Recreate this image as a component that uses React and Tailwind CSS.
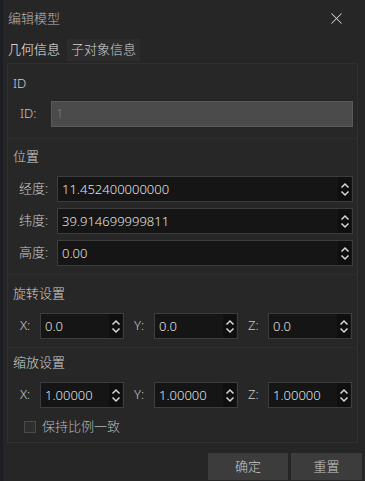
import { X } from "lucide-react";

const font = { fontFamily: '"Noto Sans", "Noto Sans CJK SC", sans-serif' };

function Spin() {
    return (
        <div className="flex flex-col items-center justify-center w-[13px] h-full bg-[#0f0f0f] gap-[1px] mr-[1px]">
            <svg width="10" height="7" viewBox="0 0 10 7">
                <path d="M1.5 5.5 L5 2 L8.5 5.5" fill="none" stroke="#d8d8d8" strokeWidth="1.5" />
            </svg>
            <svg width="10" height="7" viewBox="0 0 10 7">
                <path d="M1.5 1.5 L5 5 L8.5 1.5" fill="none" stroke="#d8d8d8" strokeWidth="1.5" />
            </svg>
        </div>
    );
}

function NumberInput({ value, className = "" }) {
    return (
        <div className={`flex items-center h-[26px] bg-[#151515] border border-[#3d3d3d] ${className}`}>
            <span className="flex-1 pl-[4px] text-[13px] text-[#e4e4e4] leading-none">{value}</span>
            <Spin />
        </div>
    );
}

function GroupTitle({ children }) {
    return <div className="h-[20px] flex items-center pl-[5px] text-[13px] text-[#d4d4d4]">{children}</div>;
}

function XYZRow({ values }) {
    const labels = ["X:", "Y:", "Z:"];
    return (
        <div className="flex items-center pl-[12px] pr-[4px]">
            {labels.map((l, i) => (
                <div key={l} className={`flex items-center ${i > 0 ? "ml-[10px]" : ""}`}>
                    <span className="w-[20px] text-[13px] text-[#c8c8c8]">{l}</span>
                    <NumberInput value={values[i]} className="w-[84px]" />
                </div>
            ))}
        </div>
    );
}

export default function App() {
    return (
        <div className="w-[365px] h-[481px] bg-[#262626] flex flex-col border-l-[3px] border-[#1d1d24] overflow-hidden font-light" style={font}>
            <div className="h-[37px] flex items-center justify-between pl-[5px] pr-[19px] shrink-0">
                <span className="text-[13px] text-[#b8b8b8]">编辑模型</span>
                <X size={19} strokeWidth={1.3} color="#cfcfcf" />
            </div>
            <div className="h-[22px] flex items-stretch shrink-0 mt-[2px]">
                <div className="w-[62px] flex items-center pl-[5px] text-[13px] text-[#f0f0f0]">几何信息</div>
                <div className="ml-[2px] w-[73px] flex items-center justify-center bg-[#2c2c2c] text-[13px] text-[#d0d0d0]">子对象信息</div>
            </div>
            <div className="ml-[4px] mr-[7px] mt-[2px] h-[380px] border border-[#303030] bg-[#272727] flex flex-col shrink-0">
                {/* ID */}
                <div className="pt-[10px] h-[75px] border-b border-[#2e2e2e]">
                    <GroupTitle>ID</GroupTitle>
                    <div className="flex items-center mt-[7px] pl-[12px] pr-[4px]">
                        <span className="w-[31px] text-[13px] text-[#c8c8c8]">ID:</span>
                        <div className="flex-1 h-[26px] bg-[#4b4b4b] border border-[#5a5a5a] flex items-center pl-[4px] text-[13px] text-[#7a7a7a]">1</div>
                    </div>
                </div>
                {/* 位置 */}
                <div className="pt-[8px] h-[136px] border-b border-[#2e2e2e]">
                    <GroupTitle>位置</GroupTitle>
                    <div className="flex flex-col gap-[6px] mt-[9px] pl-[11px] pr-[4px]">
                        {[
                            ["经度:", "11.452400000000"],
                            ["纬度:", "39.914699999811"],
                            ["高度:", "0.00"],
                        ].map(([l, v]) => (
                            <div key={l} className="flex items-center">
                                <span className="w-[38px] text-[13px] text-[#c8c8c8]">{l}</span>
                                <NumberInput value={v} className="flex-1" />
                            </div>
                        ))}
                    </div>
                </div>
                {/* 旋转设置 */}
                <div className="pt-[9px] h-[73px] border-b border-[#2e2e2e]">
                    <GroupTitle>旋转设置</GroupTitle>
                    <div className="mt-[9px]">
                        <XYZRow values={["0.0", "0.0", "0.0"]} />
                    </div>
                </div>
                {/* 缩放设置 */}
                <div className="pt-[5px] flex-1">
                    <GroupTitle>缩放设置</GroupTitle>
                    <div className="mt-[9px]">
                        <XYZRow values={["1.00000", "1.00000", "1.00000"]} />
                    </div>
                    <label className="flex items-center mt-[9px] pl-[16px] gap-[6px]">
                        <span className="w-[12px] h-[12px] border border-[#4a4a4a] bg-[#2e2e2e]" />
                        <span className="text-[13px] text-[#b8b8b8]">保持比例一致</span>
                    </label>
                </div>
            </div>
            <div className="flex justify-end gap-[3px] pr-[3px] mt-[10px]">
                <button className="w-[80px] h-[27px] bg-[#3c3c3c] text-[13px] text-[#c8c8c8]">确定</button>
                <button className="w-[71px] h-[27px] bg-[#3c3c3c] text-[13px] text-[#c8c8c8]">重置</button>
            </div>
        </div>
    );
}
